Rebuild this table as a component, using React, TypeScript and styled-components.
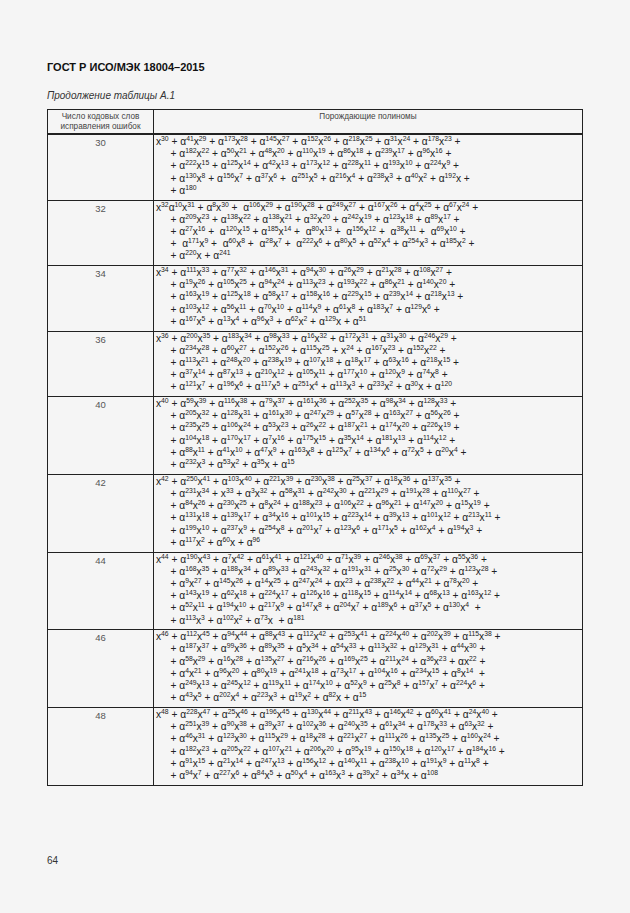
import { createGlobalStyle } from "styled-components";
import styled from "styled-components";

type RowType = {
  count: number;
  lines: string[];
};

const rows: RowType[] = [
  {
    count: 30,
    lines: [
      "x30 + α41x29 + α173x28 + α145x27 + α152x26 + α218x25 + α31x24 + α178x23 +",
      "+ α182x22 + α50x21 + α48x20 + α110x19 + α86x18 + α239x17 + α96x16 +",
      "+ α222x15 + α125x14 + α42x13 + α173x12 + α228x11 + α193x10 + α224x9 +",
      "+ α130x8 + α156x7 + α37x6 +  α251x5 + α216x4 + α238x3 + α40x2 + α192x +",
      "+ α180",
    ],
  },
  {
    count: 32,
    lines: [
      "x32α10x31 + α8x30 +  α106x29 + α190x28 + α249x27 + α167x26 + α4x25 + α67x24 +",
      "+ α209x23 + α138x22 + α138x21 + α32x20 + α242x19 + α123x18 + α89x17 +",
      "+ α27x16 +  α120x15 + α185x14 +  α80x13 +  α156x12 +  α38x11 +  α69x10 +",
      "+  α171x9 +  α60x8 +  α28x7 +  α222x6 + α80x5 + α52x4 + α254x3 + α185x2 +",
      "+ α220x + α241",
    ],
  },
  {
    count: 34,
    lines: [
      "x34 + α111x33 + α77x32 + α146x31 + α94x30 + α26x29 + α21x28 + α108x27 +",
      "+ α19x26 + α105x25 + α94x24 + α113x23 + α193x22 + α86x21 + α140x20 +",
      "+ α163x19 + α125x18 + α58x17 + α158x16 + α229x15 + α239x14 + α218x13 +",
      "+ α103x12 + α56x11 + α70x10 + α114x9 + α61x8 + α183x7 + α129x6 +",
      "+ α167x5 + α13x4 + α96x3 + α62x2 + α129x + α51",
    ],
  },
  {
    count: 36,
    lines: [
      "x36 + α200x35 + α183x34 + α98x33 + α16x32 + α172x31 + α31x30 + α246x29 +",
      "+ α234x28 + α60x27 + α152x26 + α115x25 + x24 + α167x23 + α152x22 +",
      "+ α113x21 + α248x20 + α238x19 + α107x18 + α18x17 + α63x16 + α218x15 +",
      "+ α37x14 + α87x13 + α210x12 + α105x11 + α177x10 + α120x9 + α74x8 +",
      "+ α121x7 + α196x6 + α117x5 + α251x4 + α113x3 + α233x2 + α30x + α120",
    ],
  },
  {
    count: 40,
    lines: [
      "x40 + α59x39 + α116x38 + α79x37 + α161x36 + α252x35 + α98x34 + α128x33 +",
      "+ α205x32 + α128x31 + α161x30 + α247x29 + α57x28 + α163x27 + α56x26 +",
      "+ α235x25 + α106x24 + α53x23 + α26x22 + α187x21 + α174x20 + α226x19 +",
      "+ α104x18 + α170x17 + α7x16 + α175x15 + α35x14 + α181x13 + α114x12 +",
      "+ α88x11 + α41x10 + α47x9 + α163x8 + α125x7 + α134x6 + α72x5 + α20x4 +",
      "+ α232x3 + α53x2 + α35x + α15",
    ],
  },
  {
    count: 42,
    lines: [
      "x42 + α250x41 + α103x40 + α221x39 + α230x38 + α25x37 + α18x36 + α137x35 +",
      "+ α231x34 + x33 + α3x32 + α58x31 + α242x30 + α221x29 + α191x28 + α110x27 +",
      "+ α84x26 + α230x25 + α8x24 + α188x23 + α106x22 + α96x21 + α147x20 + α15x19 +",
      "+ α131x18 + α139x17 + α34x16 + α101x15 + α223x14 + α39x13 + α101x12 + α213x11 +",
      "+ α199x10 + α237x9 + α254x8 + α201x7 + α123x6 + α171x5 + α162x4 + α194x3 +",
      "+ α117x2 + α60x + α96",
    ],
  },
  {
    count: 44,
    lines: [
      "x44 + α190x43 + α7x42 + α61x41 + α121x40 + α71x39 + α246x38 + α69x37 + α55x36 +",
      "+ α168x35 + α188x34 + α89x33 + α243x32 + α191x31 + α25x30 + α72x29 + α123x28 +",
      "+ α9x27 + α145x26 + α14x25 + α247x24 + αx23 + α238x22 + α44x21 + α78x20 +",
      "+ α143x19 + α62x18 + α224x17 + α126x16 + α118x15 + α114x14 + α68x13 + α163x12 +",
      "+ α52x11 + α194x10 + α217x9 + α147x8 + α204x7 + α189x6 + α37x5 + α130x4  +",
      "+ α113x3 + α102x2 + α73x  + α181",
    ],
  },
  {
    count: 46,
    lines: [
      "x46 + α112x45 + α94x44 + α88x43 + α112x42 + α253x41 + α224x40 + α202x39 + α115x38 +",
      "+ α187x37 + α99x36 + α89x35 + α5x34 + α54x33 + α113x32 + α129x31 + α44x30 +",
      "+ α58x29 + α16x28 + α135x27 + α216x26 + α169x25 + α211x24 + α36x23 + αx22 +",
      "+ α4x21 + α96x20 + α80x19 + α241x18 + α73x17 + α104x16 + α234x15 + α8x14  +",
      "+ α249x13 + α245x12 + α119x11 + α174x10 + α52x9 + α25x8 + α157x7 + α224x6 +",
      "+ α43x5 + α202x4 + α223x3 + α19x2 + α82x + α15",
    ],
  },
  {
    count: 48,
    lines: [
      "x48 + α228x47 + α25x46 + α196x45 + α130x44 + α211x43 + α146x42 + α60x41 + α24x40 +",
      "+ α251x39 + α90x38 + α39x37 + α102x36 + α240x35 + α61x34 + α178x33 + α63x32 +",
      "+ α46x31 + α123x30 + α115x29 + α18x28 + α221x27 + α111x26 + α135x25 + α160x24 +",
      "+ α182x23 + α205x22 + α107x21 + α206x20 + α95x19 + α150x18 + α120x17 + α184x16 +",
      "+ α91x15 + α21x14 + α247x13 + α156x12 + α140x11 + α238x10 + α191x9 + α11x8 +",
      "+ α94x7 + α227x6 + α84x5 + α50x4 + α163x3 + α39x2 + α34x + α108",
    ],
  },
];

// splits "α41x29" style text into letters with superscript exponents
const renderTerms = (line: string) => {
  const parts = line.split(/([αx]\d*)/).filter((p) => p !== "");
  return parts.map((part, i) => {
    const m = part.match(/^([αx])(\d*)$/);
    if (!m) return <span key={i}>{part}</span>;
    return (
      <span key={i}>
        {m[1]}
        {m[2] && <Exp>{m[2]}</Exp>}
      </span>
    );
  });
};

const App = () => {
  return (
    <>
      <GlobalStyle />
      <Page>
        <Title>ГОСТ Р ИСО/МЭК 18004–2015</Title>
        <Caption>Продолжение таблицы А.1</Caption>
        <Table>
          <thead>
            <tr>
              <HeadCell $narrow>
                Число кодовых слов
                <br />
                исправления ошибок
              </HeadCell>
              <HeadCell>Порождающие полиномы</HeadCell>
            </tr>
          </thead>
          <tbody>
            {rows.map((row) => (
              <tr key={`row-${row.count}`}>
                <CountCell>{row.count}</CountCell>
                <PolyCell>
                  {row.lines.map((line, idx) => (
                    <PolyLine key={idx} $first={idx === 0}>
                      {renderTerms(line)}
                    </PolyLine>
                  ))}
                </PolyCell>
              </tr>
            ))}
          </tbody>
        </Table>
        <PageNumber>64</PageNumber>
      </Page>
    </>
  );
};

export default App;

const GlobalStyle = createGlobalStyle`
  html, body {
    margin: 0;
    padding: 0;
    background: #f5f5f5;
  }
  body {
    font-family: "Liberation Sans", Arial, sans-serif;
    color: #222;
  }
`;

const Page = styled.div`
  width: 630px;
  height: 913px;
  box-sizing: border-box;
  padding: 60px 40px 0 47px;
  display: flex;
  flex-direction: column;
`;

const Title = styled.div`
  font-size: 11px;
  font-weight: bold;
  line-height: 14px;
  color: #111;
`;

const Caption = styled.div`
  margin-top: 16px;
  font-size: 10px;
  font-style: italic;
  line-height: 12px;
  color: #333;
`;

const Table = styled.table`
  margin-top: 7px;
  width: 536px;
  border-collapse: collapse;
  border: 1.5px solid #222;
  table-layout: fixed;
`;

const HeadCell = styled.th<{ $narrow?: boolean }>`
  width: ${(p) => (p.$narrow ? "101px" : "auto")};
  border: 1px solid #222;
  border-bottom: 2px solid #222;
  font-weight: normal;
  font-size: 8.2px;
  line-height: 9.5px;
  color: #444;
  padding: 2px 2px 2px;
  vertical-align: top;
  text-align: center;
`;

const CountCell = styled.td`
  border: 1px solid #222;
  vertical-align: top;
  text-align: center;
  font-size: 9.5px;
  line-height: 12px;
  color: #555;
  padding: 2px 0 0;
`;

const PolyCell = styled.td`
  border: 1px solid #222;
  vertical-align: top;
  padding: 1px 2px 2.5px 2px;
`;

const PolyLine = styled.div<{ $first?: boolean }>`
  padding-left: ${(p) => (p.$first ? "0" : "14.5px")};
  font-size: 10.2px;
  line-height: 12.2px;
  white-space: pre;
  color: #222;
`;

const Exp = styled.sup`
  font-size: 6.8px;
  line-height: 0;
  vertical-align: 4px;
`;

const PageNumber = styled.div`
  margin-top: 69px;
  font-size: 10px;
  line-height: 12px;
  color: #333;
`;
